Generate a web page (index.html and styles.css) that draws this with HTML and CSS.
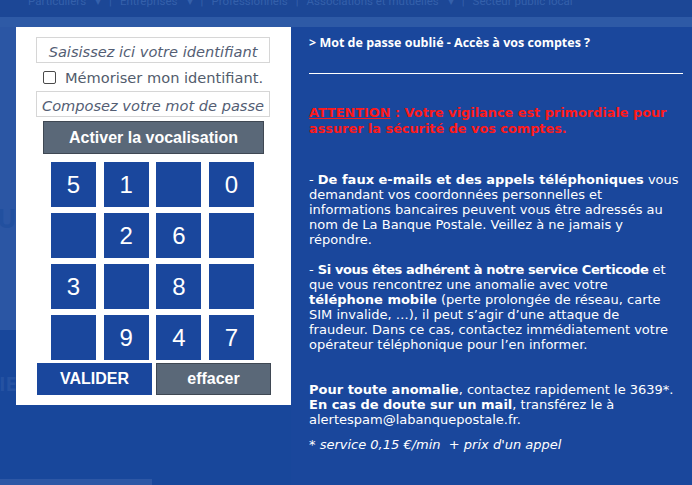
FILE: index.html
```html
<!DOCTYPE html>
<html lang="fr">
<head>
<meta charset="utf-8">
<title>Connexion</title>
<link rel="stylesheet" href="styles.css">
</head>
<body>
<div class="page">
  <div class="nav">
    <span class="nav-item">Particuliers</span><span class="nav-caret">▾</span><span class="nav-sep">|</span>
    <span class="nav-item">Entreprises</span><span class="nav-caret">▾</span><span class="nav-sep">|</span>
    <span class="nav-item">Professionnels</span><span class="nav-sep">|</span>
    <span class="nav-item">Associations et mutuelles</span><span class="nav-caret">▾</span><span class="nav-sep">|</span>
    <span class="nav-item">Secteur public local</span>
  </div>
  <div class="band"></div>
  <div class="hero"><span class="hero-text">UE</span></div>
  <div class="lower"><span class="lower-text">IE</span></div>
  <div class="foot-strip"></div>
</div>

<div class="modal">
  <div class="login">
    <div class="field field-id">Saisissez ici votre identifiant</div>
    <div class="remember"><span class="check"></span><span>Mémoriser mon identifiant.</span></div>
    <div class="field field-pw">Composez votre mot de passe</div>
    <div class="btn btn-voice">Activer la vocalisation</div>
    <div class="keypad">
      <div class="key">5</div><div class="key">1</div><div class="key"></div><div class="key">0</div>
      <div class="key"></div><div class="key">2</div><div class="key">6</div><div class="key"></div>
      <div class="key">3</div><div class="key"></div><div class="key">8</div><div class="key"></div>
      <div class="key"></div><div class="key">9</div><div class="key">4</div><div class="key">7</div>
    </div>
    <div class="actions">
      <div class="btn btn-valid">VALIDER</div>
      <div class="btn btn-clear">effacer</div>
    </div>
  </div>

  <div class="info">
    <div class="forgot">&gt; Mot de passe oublié - Accès à vos comptes ?</div>
    <div class="rule"></div>
    <p class="alert"><span class="alert-u">ATTENTION</span> : Votre vigilance est primordiale pour assurer la sécurité de vos comptes.</p>
    <p class="p1">- <b>De faux e-mails et des appels téléphoniques</b> vous demandant vos coordonnées personnelles et informations bancaires peuvent vous être adressés au nom de La Banque Postale. Veillez à ne jamais y répondre.</p>
    <p class="p2">- <b class="tight">Si vous êtes adhérent à notre service Certicode</b> et que vous rencontrez une anomalie avec votre <b>téléphone mobile</b> (perte prolongée de réseau, carte SIM invalide, …), il peut s’agir d’une attaque de fraudeur. Dans ce cas, contactez immédiatement votre opérateur téléphonique pour l’en informer.</p>
    <p class="p3"><b>Pour toute anomalie</b>, contactez rapidement le 3639*.<br><b>En cas de doute sur un mail</b>, transférez le à alertespam@labanquepostale.fr.</p>
    <p class="note">* service 0,15 €/min&nbsp; + prix d'un appel</p>
  </div>
</div>
</body>
</html>
```

FILE: styles.css
```css
html, body {
  margin: 0;
  padding: 0;
}
body {
  width: 692px;
  height: 485px;
  overflow: hidden;
  background: #18479b;
  position: relative;
  font-family: "DejaVu Sans", Verdana, sans-serif;
}

/* background page */
.nav {
  height: 17px;
  background: #1c4796;
  overflow: hidden;
  display: flex;
  align-items: flex-start;
  padding-left: 28px;
  font-family: "Roboto", sans-serif;
  font-size: 11.5px;
  line-height: 14px;
  color: #3460ab;
  white-space: nowrap;
}
.nav-item,
.nav-caret,
.nav-sep {
  display: block;
  margin-top: -6px;
  flex: none;
}
.nav-caret {
  margin-left: 9px;
}
.nav-sep {
  margin-left: 8px;
  margin-right: 8px;
}
.band {
  height: 10px;
  background: #2e5aa6;
}
.hero {
  height: 303px;
  background: #2b56a4;
  overflow: hidden;
}
.hero-text {
  display: block;
  margin-top: 176px;
  margin-left: -3px;
  font-family: "Open Sans", sans-serif;
  font-weight: 700;
  font-size: 26px;
  line-height: 30px;
  color: #22509f;
}
.lower {
  height: 149px;
  overflow: hidden;
}
.lower-text {
  display: block;
  margin-top: 42px;
  margin-left: -1px;
  font-family: "Open Sans", sans-serif;
  font-weight: 700;
  font-size: 20px;
  line-height: 24px;
  color: #2552a2;
}
.foot-strip {
  width: 152px;
  height: 6px;
  background: #2d57a5;
}

/* modal */
.modal {
  position: absolute;
  top: 27px;
  left: 16px;
  display: flex;
  align-items: flex-start;
}
.login {
  width: 275px;
  height: 378px;
  background: #ffffff;
  box-sizing: border-box;
  padding-top: 10px;
  display: flex;
  flex-direction: column;
}
.field {
  margin-left: 20px;
  width: 234px;
  height: 26px;
  box-sizing: border-box;
  border: 1px solid #d6d6d6;
  font-style: italic;
  font-size: 14.6px;
  line-height: 28px;
  text-align: center;
  color: #545e74;
  white-space: nowrap;
  overflow: hidden;
}
.remember {
  display: flex;
  align-items: center;
  height: 28px;
  margin-left: 27px;
  font-size: 14.6px;
  color: #525c6c;
  white-space: nowrap;
}
.check {
  width: 11px;
  height: 11px;
  border: 1px solid #4a4a4a;
  border-radius: 2px;
  background: #fff;
  margin-right: 9px;
  flex: none;
}
.btn {
  box-sizing: border-box;
  display: flex;
  align-items: center;
  justify-content: center;
  font-family: "Liberation Sans", Arial, sans-serif;
  font-weight: 700;
  font-size: 16px;
  color: #ffffff;
}
.btn-voice {
  margin-top: 4px;
  margin-left: 27px;
  width: 221px;
  height: 33px;
  background: #5a6878;
  border: 1px solid #3f4853;
}
.keypad {
  margin-top: 8px;
  margin-left: 35px;
  display: grid;
  grid-template-columns: repeat(4, 45px);
  grid-auto-rows: 45px;
  column-gap: 7.67px;
  row-gap: 6px;
}
.key {
  background: #1a479d;
  color: #ffffff;
  font-family: "Liberation Sans", Arial, sans-serif;
  font-size: 24px;
  display: flex;
  align-items: center;
  justify-content: center;
}
.actions {
  margin-top: 3px;
  margin-left: 21px;
  display: flex;
  gap: 4px;
}
.btn-valid {
  width: 115px;
  height: 32px;
  background: #1a479d;
}
.btn-clear {
  width: 115px;
  height: 32px;
  background: #5a6878;
  border: 1px solid #3f4853;
}

.info {
  width: 401px;
  height: 458px;
  background: #1a479c;
  box-sizing: border-box;
  padding: 8px 12px 0 18px;
  color: #ffffff;
  font-size: 13px;
  line-height: 15px;
}
.forgot {
  font-family: "Open Sans", sans-serif;
  font-weight: 700;
  font-size: 12.5px;
  line-height: 15px;
  white-space: nowrap;
}
.rule {
  margin-top: 23px;
  margin-right: -3px;
  height: 1px;
  background: #ffffff;
}
.info p {
  margin: 0;
}
.alert {
  margin-top: 31px !important;
  color: #ff1a1a;
  font-weight: 700;
  font-size: 12.85px;
  line-height: 16px;
}
.alert-u {
  text-decoration: underline;
}
.tight {
  letter-spacing: -0.4px;
}
.p1 {
  margin-top: 35px !important;
}
.p2 {
  margin-top: 15px !important;
}
.p3 {
  margin-top: 30px !important;
}
.note {
  margin-top: 10px !important;
  font-style: italic;
}
```
